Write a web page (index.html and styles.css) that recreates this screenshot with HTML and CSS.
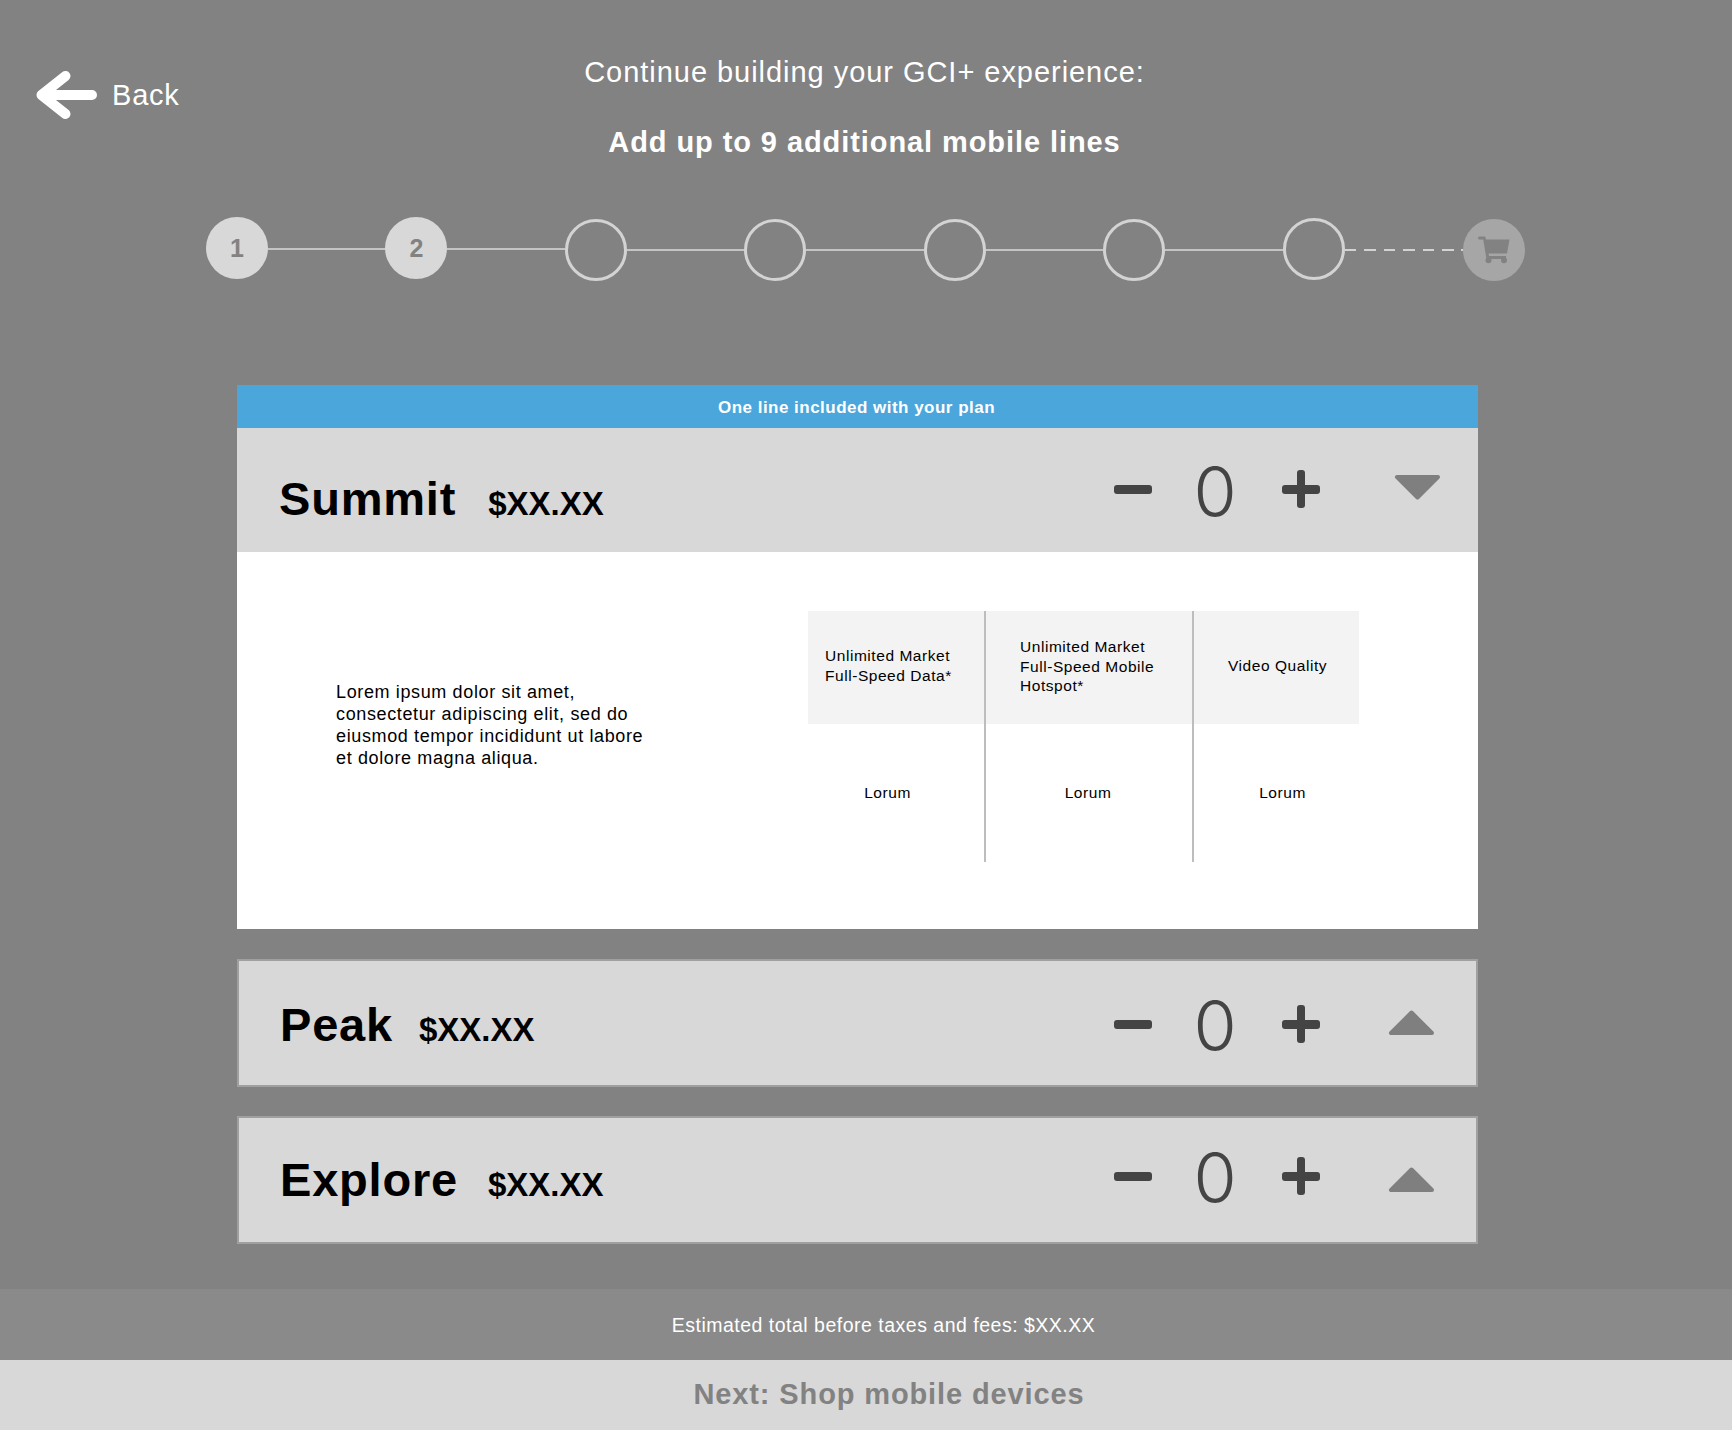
FILE: index.html
```html
<!DOCTYPE html>
<html lang="en">
<head>
<meta charset="utf-8">
<title>Add mobile lines</title>
<link rel="stylesheet" href="styles.css">
</head>
<body>
<div class="page">
  <header class="top">
    <a class="back">
      <svg class="back-arrow" viewBox="0 0 62 48" width="62" height="48"><path d="M57 24H6.5M30.5 5 6.5 24 30.5 43" fill="none" stroke="#fff" stroke-width="10" stroke-linecap="round" stroke-linejoin="round"/></svg>
      <span>Back</span>
    </a>
    <div class="titles">
      <h1 class="title">Continue building your GCI+ experience:</h1>
      <h2 class="subtitle">Add up to 9 additional mobile lines</h2>
    </div>
  </header>

  <div class="stepper">
    <div class="step step-done step-high">1</div>
    <div class="link link-high"></div>
    <div class="step step-done step-high">2</div>
    <div class="link link-high"></div>
    <div class="step"></div>
    <div class="link"></div>
    <div class="step"></div>
    <div class="link"></div>
    <div class="step"></div>
    <div class="link"></div>
    <div class="step"></div>
    <div class="link"></div>
    <div class="step step-mid"></div>
    <div class="link link-dashed"></div>
    <div class="step step-cart">
      <svg viewBox="0 0 32 28" width="32" height="28"><path fill="#828282" d="M1.5 0.5H7.2L8 3.5H31.5L29 17.5H10.6L11 20H28V23H8.5L5.2 3.5H1.5A1.5 1.5 0 0 1 1.5 0.5Z"/><circle cx="10.5" cy="24.3" r="3" fill="#828282"/><circle cx="26" cy="24.3" r="3" fill="#828282"/></svg>
    </div>
  </div>

  <main class="plans">
    <section class="plan-open">
      <div class="banner">One line included with your plan</div>
      <div class="row row-open">
        <div class="plan-id">
          <span class="plan-name">Summit</span>
          <span class="plan-price">$XX.XX</span>
        </div>
        <div class="qty">
          <span class="bar"></span>
          <span class="count">0</span>
          <span class="bar bar-plus"></span>
          <svg class="caret caret-down" viewBox="0 0 47 25" width="47" height="25"><path d="M3 2H44L23.5 22.5Z" fill="#7f7f7f" stroke="#7f7f7f" stroke-width="4" stroke-linejoin="round"/></svg>
        </div>
      </div>
      <div class="details">
        <p class="lorem">Lorem ipsum dolor sit amet, consectetur adipiscing elit, sed do eiusmod tempor incididunt ut labore et dolore magna aliqua.</p>
        <div class="specs">
          <div class="spec-head spec-a">Unlimited Market<br>Full-Speed Data*</div>
          <div class="spec-head spec-b">Unlimited Market<br>Full-Speed Mobile<br>Hotspot*</div>
          <div class="spec-head spec-c">Video Quality</div>
          <div class="spec-val spec-val-a">Lorum</div>
          <div class="spec-val spec-val-b">Lorum</div>
          <div class="spec-val spec-val-c">Lorum</div>
        </div>
      </div>
    </section>

    <section class="row row-closed row-peak">
      <div class="plan-id">
        <span class="plan-name">Peak</span>
        <span class="plan-price">$XX.XX</span>
      </div>
      <div class="qty">
        <span class="bar"></span>
        <span class="count">0</span>
        <span class="bar bar-plus"></span>
        <svg class="caret caret-up" viewBox="0 0 47 25" width="47" height="25"><path d="M3 23H44L23.5 2.5Z" fill="#7f7f7f" stroke="#7f7f7f" stroke-width="4" stroke-linejoin="round"/></svg>
      </div>
    </section>

    <section class="row row-closed row-last">
      <div class="plan-id">
        <span class="plan-name">Explore</span>
        <span class="plan-price">$XX.XX</span>
      </div>
      <div class="qty">
        <span class="bar"></span>
        <span class="count">0</span>
        <span class="bar bar-plus"></span>
        <svg class="caret caret-up" viewBox="0 0 47 25" width="47" height="25"><path d="M3 23H44L23.5 2.5Z" fill="#7f7f7f" stroke="#7f7f7f" stroke-width="4" stroke-linejoin="round"/></svg>
      </div>
    </section>
  </main>

  <footer class="foot">
    <div class="total">Estimated total before taxes and fees: $XX.XX</div>
    <div class="next">Next: Shop mobile devices</div>
  </footer>
</div>
</body>
</html>
```

FILE: styles.css
```css
* { box-sizing: border-box; }
html, body { margin: 0; padding: 0; }
body {
  background: #828282;
  font-family: "Liberation Sans", Arial, sans-serif;
  color: #fff;
}
.page {
  width: 1732px;
  height: 1430px;
  display: flex;
  flex-direction: column;
  overflow: hidden;
}

/* header */
.top {
  display: grid;
  grid-template-columns: 1fr;
  height: 217px;
  padding-top: 52px;
}
.back {
  grid-area: 1 / 1;
  align-self: start;
  justify-self: start;
  display: flex;
  align-items: center;
  gap: 15px;
  margin: 19px 0 0 35px;
  font-size: 29px;
  letter-spacing: 0.8px;
  line-height: 48px;
}
.titles { grid-area: 1 / 1; text-align: center; padding-right: 3px; }
.title {
  margin: 0;
  font-size: 29px;
  font-weight: 400;
  line-height: 40px;
  letter-spacing: 0.96px;
}
.subtitle {
  margin: 30px 0 0;
  font-size: 29px;
  font-weight: 700;
  line-height: 40px;
  letter-spacing: 0.92px;
}

/* stepper */
.stepper {
  display: flex;
  align-items: flex-start;
  width: 1319px;
  margin-left: 206px;
  height: 168px;
}
.step {
  flex: none;
  width: 62px;
  height: 62px;
  margin-top: 2px;
  border: 3px solid #d3d3d3;
  border-radius: 50%;
  display: flex;
  align-items: center;
  justify-content: center;
}
.step-mid { margin-top: 1px; }
.step-high { margin-top: 0; }
.step-done {
  background: #d8d8d8;
  border: 0;
  color: #828282;
  font-size: 25px;
  font-weight: 700;
}
.step-cart { background: #a6a6a6; border: 0; }
.link {
  flex: none;
  width: 117.45px;
  height: 2px;
  margin-top: 32px;
  background: #c4c4c4;
}
.link-high { margin-top: 31px; }
.link-dashed {
  flex: 1;
  background: repeating-linear-gradient(90deg, #d3d3d3 0 11.5px, transparent 11.5px 19.4px);
}

/* plans */
.plans { width: 1241px; margin-left: 237px; }
.banner {
  height: 43px;
  background: #4ba6dc;
  padding-right: 2px;
  font-size: 17px;
  font-weight: 700;
  letter-spacing: 0.48px;
  line-height: 45px;
  text-align: center;
}
.row {
  display: flex;
  justify-content: space-between;
  background: #d8d8d8;
  color: #000;
}
.row-open { height: 124px; }
.row-closed {
  height: 128px;
  margin-top: 30px;
  border: 2px solid #a0a0a0;
}
.row-last { margin-top: 29px; }

.plan-id {
  display: flex;
  align-items: baseline;
  gap: 32px;
  padding-left: 42px;
}
.row-closed .plan-id { padding-left: 41px; }
.plan-name {
  font-size: 47px;
  font-weight: 700;
  letter-spacing: 0.8px;
  line-height: 54px;
}
.plan-price {
  font-size: 33px;
  font-weight: 700;
  line-height: 54px;
}
.row-open .plan-id { padding-top: 44px; }
.row-peak .plan-id { padding-top: 37px; gap: 26px; }
.row-last .plan-id { padding-top: 35px; gap: 30px; }

.qty {
  position: relative;
  display: flex;
  align-items: flex-start;
  width: 364px;
}
.bar {
  position: relative;
  flex: none;
  width: 38px;
  height: 9px;
  border-radius: 3px;
  background: #444;
  margin-top: 57px;
}
.bar-plus::after {
  content: "";
  position: absolute;
  left: 15px;
  top: -15px;
  width: 8px;
  height: 38px;
  border-radius: 3px;
  background: #444;
}
.count {
  flex: none;
  width: 130px;
  padding-right: 4px;
  text-align: center;
  font-family: "Inter", sans-serif;
  font-weight: 300;
  font-size: 70px;
  line-height: 100px;
  color: #444;
  margin-top: 14px;
}
.caret { flex: none; margin-left: 74px; margin-top: 47px; }
.row-closed .qty { width: 362px; }
.row-closed .bar { margin-top: 59px; }
.row-closed .count { margin-top: 15px; }
.caret-up { margin-left: 68px; margin-top: 49px; }
.row-last .bar { margin-top: 54px; }
.row-last .count { margin-top: 10px; }
.row-last .caret-up { margin-top: 49px; }

/* details */
.details {
  display: flex;
  height: 377px;
  background: #fff;
  color: #000;
}
.lorem {
  width: 320px;
  margin: 129px 0 0 99px;
  font-size: 18px;
  line-height: 22px;
  letter-spacing: 0.63px;
}
.specs {
  display: grid;
  grid-template-columns: 178px 208px 165px;
  grid-template-rows: 113px 138px;
  margin: 59px 0 0 152px;
  height: 251px;
  font-size: 15.5px;
  line-height: 19.5px;
  letter-spacing: 0.55px;
}
.spec-head {
  display: flex;
  align-items: center;
  background: #f3f3f3;
}
.spec-a { padding: 0 0 4px 17px; }
.spec-b { padding: 0 0 2px 34px; }
.spec-c { padding: 0 0 4px 34px; }
.spec-val { text-align: center; padding-top: 59px; }
.spec-val-a { padding-right: 17px; }
.spec-val-b { padding-right: 2px; }
.spec-val-c { padding-left: 12px; }
.spec-head:nth-child(-n+2), .spec-val:nth-child(-n+5) { border-right: 2px solid #bdbdbd; }

/* footer */
.foot { margin-top: auto; }
.total {
  height: 71px;
  background: #8a8a8a;
  padding-left: 35px;
  font-size: 19.5px;
  letter-spacing: 0.5px;
  line-height: 72px;
  text-align: center;
}
.next {
  height: 70px;
  background: #d8d8d8;
  color: #828282;
  padding-left: 46px;
  font-size: 29px;
  font-weight: 700;
  letter-spacing: 0.88px;
  line-height: 68px;
  text-align: center;
}
```
